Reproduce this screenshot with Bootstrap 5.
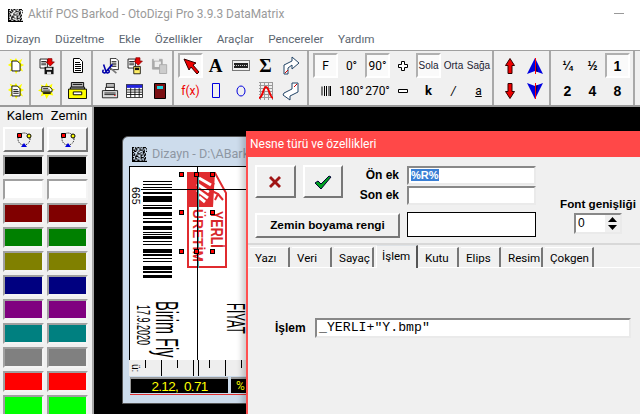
<!DOCTYPE html>
<html lang="tr">
<head>
<meta charset="UTF-8">
<title>Aktif POS Barkod</title>
<link href="https://cdn.jsdelivr.net/npm/bootstrap@5.3.0/dist/css/bootstrap.min.css" rel="stylesheet">
<style>
body { width: 640px; height: 414px; overflow: hidden; background: #f0f0f0; font-family: Roboto, "Liberation Sans", sans-serif; font-size: 12px; color: #000; }
.app-title { height: 30px; background: #fff; color: #9a9a9a; font-size: 11.9px; padding-left: 8px; gap: 5px; }
.min-mark { width: 10px; height: 1px; background: #999; margin-left: auto; margin-right: 16px; margin-bottom: 3px; }
.app-menu { height: 20px; background: #fff; color: #5c6670; font-size: 11.7px; padding-left: 6px; }
.app-menu span { margin-right: 14.5px; }
.tool-strip { height: 57px; border-top: 1px solid #a0a0a0; border-bottom: 2px solid #9a9a9a; padding-top: 2px; }
.tool-grp { display: grid; grid-template-rows: 25px 25px; grid-auto-flow: column; grid-auto-columns: 25px; border-right: 2px solid #a8a8a8; height: 54px; margin-top: -2px; padding-top: 2px; }
.w31 { width: 31px; padding-left: 3px; }
.w81 { width: 81px; padding-left: 4px; }
.w135 { width: 135px; padding-left: 4px; grid-auto-flow: row; grid-template-columns: repeat(5, 25px); }
.w185 { width: 185px; padding-left: 4px; grid-auto-flow: row; grid-template-columns: 25px 27px 25px 26px 25px 25px 25px; }
.w57 { width: 57px; padding-left: 3px; }
.w84 { width: 84px; padding-left: 4px; }
.tool-cell { display: flex; align-items: center; justify-content: center; white-space: nowrap; font-size: 12px; line-height: 1; }
.tool-on { background: #fafafa; border: 2px solid; border-color: #b0b0b0 #fff #fff #b0b0b0; }
.al-txt { font-size: 10px; color: #223; font-family: "Liberation Sans", sans-serif; }
.big-num { font-family: "Liberation Sans", sans-serif; font-weight: 700; font-size: 14px; }
.main-area { height: 307px; }
.color-side { width: 94px; border-right: 2px solid #a8a8a8; }
.color-head { height: 20px; display: grid; grid-template-columns: 44px 44px; padding-left: 3px; font-size: 13px; text-align: center; line-height: 17px; }
.color-rows { display: grid; grid-template-columns: 41px 41px; gap: 3px 3px; padding-left: 3px; }
.pen-btn { height: 25px; padding: 0; border-radius: 0; border: 2px solid; border-color: #fff #777 #777 #fff; background: #f0f0f0; display: flex; align-items: center; justify-content: center; margin-bottom: 0; }
.swatch { height: 21px; border: 2px solid; border-color: #a0a0a0 #f4f4f4 #f4f4f4 #a0a0a0; }
.work-area { width: 546px; background: #000; overflow: hidden; }
.design-win { left: 28px; top: 29px; width: 180px; height: 268px; background: #cddcec; border: 1px solid #555; border-radius: 6px 0 0 0; }
.design-title { height: 29px; padding: 6px 0 0 9px; gap: 5px; color: #8d97a3; font-size: 12.6px; white-space: nowrap; }
.design-sheet { left: 6px; top: 29px; width: 170px; height: 194px; background: #fff; border-left: 1px solid #000; border-top: 1px solid #000; }
.design-ruler { left: 6px; top: 223px; width: 170px; height: 16px; background: #eee; }
.status-a { left: 7px; top: 240px; width: 98px; height: 16px; background: #000; color: #ff0; font-size: 13.5px; letter-spacing: -.7px; word-spacing: 3px; line-height: 15px; text-align: center; border-top: 2px solid #999; border-left: 1px solid #999; font-family: "Liberation Sans", sans-serif; }
.status-b { left: 108px; top: 240px; width: 40px; height: 16px; background: #000; color: #ff0; font-size: 12px; line-height: 15px; padding-left: 5px; border-top: 2px solid #999; }
.red-rule { left: 7px; top: 257px; width: 170px; height: 1px; background: #e03030; }
.rot-txt { position: absolute; writing-mode: vertical-rl; white-space: nowrap; line-height: 1; color: #000; font-family: "Liberation Sans", sans-serif; transform-origin: left top; }
.rot-bc { left: 0; top: 19px; width: 11px; height: 19px; background: #fff; font-size: 10.5px; text-align: center; }
.rot-date { left: 3px; top: 138px; font-size: 9px; transform: scaleX(2.1); }
.rot-name { left: 21px; top: 134px; font-size: 14.5px; transform: scaleX(2.1); }
.rot-price { left: 91px; top: 136px; font-size: 11.5px; transform: scaleX(2.3); }
.bar-svg { left: 13px; top: 14px; }
.logo-svg { left: 57px; top: 5px; }
.cross-h { left: 0; top: 22px; width: 100%; height: 1px; background: #000; }
.cross-v { left: 67px; top: 0; width: 1px; height: 193px; background: #000; }
.hnd { position: absolute; width: 5px; height: 5px; background: #f00; border: 1px solid #000; }
.prop-dlg { left: 152px; top: 24px; width: 394px; height: 283px; background: #f0f0f0; border-left: 2px solid #ff5050; box-shadow: -4px 0 6px rgba(0,0,0,.2); }
.prop-head { height: 26px; background: #ff4848; color: #fff; font-size: 12px; padding-left: 4px; margin-left: -2px; }
.prop-top { height: 88px; padding: 8px 0 0 7px; border-bottom: 2px solid #d8d8d8; }
.prop-left { width: 145px; }
.act-btn { width: 41px; height: 33px; padding: 0; border-radius: 0; border: 2px solid; border-color: #fff #777 #777 #fff; background: #f0f0f0; display: flex; align-items: center; justify-content: center; }
.act-btn:last-of-type { margin-left: 7px; }
.side-lbl { width: 57px; height: 33px; text-align: right; font-weight: 700; font-family: "Liberation Sans", sans-serif; font-size: 12px; line-height: 20px; padding-right: 1px; }
.fill-btn { width: 145px; height: 25px; padding: 0; margin-top: 15px; border-radius: 0; border: 2px solid; border-color: #fff #777 #777 #fff; background: #f0f0f0; font-weight: 700; font-family: "Liberation Sans", sans-serif; font-size: 11.8px; color: #000; }
.prop-inputs { width: 129px; margin-left: 7px; padding-top: 1px; }
.win-input { border-radius: 0; border: 2px solid; border-color: #888 #eaeaea #eaeaea #888; background: #fff; padding: 0 2px; box-shadow: none; font-size: 12px; color: #000; }
.pre-input { height: 19px; margin-bottom: 1px; font-family: "Liberation Sans", sans-serif; font-weight: 700; font-size: 11px; line-height: 15px; }
.pre-input mark { background: #3a7fd5; color: #fff; padding: 0; }
.fill-box { height: 25px; margin-top: 7px; background: #fff; border: 1px solid #000; }
.font-col { margin-left: 24px; padding-top: 32px; width: 78px; }
.font-lbl { font-weight: 700; font-family: "Liberation Sans", sans-serif; font-size: 11.7px; white-space: nowrap; line-height: 14px; }
.spin-box { width: 48px; height: 21px; margin: 2px 0 0 14px; border: 2px solid; border-color: #888 #eaeaea #eaeaea #888; background: #fff; padding-left: 2px; font-family: "Liberation Sans", sans-serif; line-height: 17px; }
.spin-arrows { width: 15px; background: #f0f0f0; display: flex; flex-direction: column; align-items: center; justify-content: space-around; }
.prop-tabs { height: 22px; padding: 2px 0 0 2px; border: 0; gap: 2px; flex-wrap: nowrap; }
.prop-tabs .nav-link { height: 20px; padding: 2px 0 0 5px; color: #000; font-size: 11.6px; background: transparent; border: 0; border-radius: 0; border-right: 2px solid #777; border-top: 1px solid #fff; line-height: 16px; }
.prop-tabs .nav-link.active { margin-top: -2px; height: 23px; background: #f0f0f0; border-right: 2px solid #555; border-left: 1px solid #fff; color: #000; }
.prop-body { border-top: 1px solid #fff; height: 147px; padding: 50px 0 0 27px; }
.calc-lbl { width: 40px; line-height: 20px; font-weight: 700; font-family: "Liberation Sans", sans-serif; font-size: 12px; }
.calc-input { width: 316px; height: 20px; font-family: "Liberation Mono", monospace; font-size: 13.2px; line-height: 16px; }
</style>
</head>
<body>

<!-- title -->
<div class="app-title d-flex align-items-center">
  <svg width="15" height="13" viewBox="0 0 14 12"><path stroke="#000" d="M0 .5h2m1 0h1m1 0h2m1 0h1m1 0h3M0 1.500h1m2 0h2m2 0h1m2 0h1m2 0h1M0 2.500h3m1 0h1m2 0h3m1 0h1M0 3.500h1m1 0h2m2 0h1m3 0h2m1 0h1M0 4.500h2m3 0h1m2 0h1m1 0h2M0 5.500h1m1 0h1m2 0h3m2 0h1m1 0h1M0 6.500h3m1 0h1m3 0h2m1 0h2M0 7.500h1m2 0h3m2 0h1m2 0h1M0 8.500h2m1 0h1m2 0h1m1 0h3m1 0h1M0 9.500h1m2 0h2m3 0h1m2 0h2M0 10.500h3m2 0h2m2 0h1m1 0h1M0 11.500h14"/></svg>
  <span>Aktif POS Barkod - OtoDizgi Pro 3.9.3 DataMatrix</span>
  <div class="min-mark"></div>
</div>
<div class="app-menu d-flex align-items-center"><span>Dizayn</span><span>Düzeltme</span><span>Ekle</span><span>Özellikler</span><span>Araçlar</span><span>Pencereler</span><span>Yardım</span></div>

<!-- toolbar -->
<div class="tool-strip d-flex">
  <div class="tool-grp w31">
    <div class="tool-cell"><svg width="18" height="18" viewBox="0 0 20 20"><path fill="#ff0" d="M10 1l2 4 5-3-2 5 4 2-4 2 3 5-5-2-3 5-2-5-5 2 2-5-4-2 4-3-2-4 5 2z"/><path fill="#fff" stroke="#000" d="M5.500 4.500h6l3 3v8h-9z"/></svg></div>
    <div class="tool-cell"><svg width="18" height="18" viewBox="0 0 20 20"><path fill="#ff0" d="M10 1l2 4 5-3-2 5 4 2-4 2 3 5-5-2-3 5-2-5-5 2 2-5-4-2 4-3-2-4 5 2z"/><path fill="#fff" stroke="#000" d="M5.500 4.500h6l3 3v8h-9z"/><path stroke="#000" d="M7 8.500h5M7 10.500h6M7 12.500h6"/></svg></div>
  </div>
  <div class="tool-grp w31">
    <div class="tool-cell"><svg width="18" height="18" viewBox="0 0 22 22"><path fill="#fff" stroke="#000" d="M2.500 2.500h9v11h-9z"/><path stroke="#000" d="M4 5.500h6M4 7.500h6M4 9.500h6"/><path fill="#e00" stroke="#800" d="M12 2h5v4h3l-5 5-5-5h2z"/><path fill="#111" d="M8 12h11v9H8z"/><path fill="#ddd" d="M10 13h7v3h-7zM11 18h5v3h-5z"/></svg></div>
    <div class="tool-cell"><svg width="19" height="17" viewBox="0 0 22 20"><path fill="#ff0" d="M11 1l2 4 5-3-1 5 4 2-4 2 2 5-5-1-3 5-2-5-5 2 2-5-5-2 5-3-2-4 5 2z"/><path fill="#fff" stroke="#000" d="M5.500 5.500h9l3 3v3h-12z"/><path stroke="#000" d="M7 7.500h6M7 9.500h8"/><path fill="#111" d="M7 12h9v2H7z"/></svg></div>
  </div>
  <div class="tool-grp w31">
    <div class="tool-cell"><svg width="12" height="16" viewBox="0 0 12 16"><path fill="#fff" stroke="#000" d="M1.500 .5h6l3 3v11h-9z"/><path stroke="#000" d="M3 4.500h5M3 6.500h6M3 8.500h6M3 10.500h6M3 12.500h6"/></svg></div>
    <div class="tool-cell"><svg width="21" height="17" viewBox="0 0 20 18"><path fill="#bbb" stroke="#000" d="M3.500 .5h13v5h-13z"/><path stroke="#000" d="M5 2.500h10"/><path fill="#fff" stroke="#000" d="M2.500 5.500h15v2h-15z"/><path fill="#ff0" stroke="#000" d="M.5 7.500h19v10H.5z"/><path fill="#fff" stroke="#000" d="M5.500 10.500h9v3h-9z"/></svg></div>
  </div>
  <div class="tool-grp w81">
    <div class="tool-cell"><svg width="18" height="16" viewBox="0 0 22 20"><path fill="#fff" stroke="#000" d="M11.500 .5h7l3 3v11h-10z"/><path stroke="#000" d="M13 4.500h6M13 6.500h6M13 8.500h6M13 10.500h6"/><path fill="none" stroke="#00a" stroke-width="2" d="M3 15a2 2 0 1 0 3 2l8-9M9 15a2 2 0 1 1-3 2L3 8"/><path stroke="#777" stroke-width="2" d="M12 13l7 6"/></svg></div>
    <div class="tool-cell"><svg width="18" height="16" viewBox="0 0 22 20"><path fill="#bbb" stroke="#000" d="M6.500 .5h10v5h-10z"/><path fill="#fff" stroke="#000" d="M5.500 5.500h11v4h-11z"/><path fill="#ddd" stroke="#000" d="M1.500 9.500h19v9h-19z"/><path stroke="#000" d="M4 12.500h14M4 14.500h14"/><path fill="#e00" d="M16 15h2v1h-2z"/></svg></div>
    <div class="tool-cell"><svg width="18" height="18" viewBox="0 0 22 22"><path fill="#fff" stroke="#000" d="M2.500 2.500h9v11h-9z"/><path stroke="#000" d="M4 5.500h6M4 7.500h6M4 9.500h6"/><path fill="#e00" stroke="#800" d="M12 1h5v4h3l-5 5-5-5h2z"/><path fill="#fe6" stroke="#000" d="M9.500 11.500h8v9h-8z"/><path fill="#111" d="M11 13h5v3h-5z"/></svg></div>
    <div class="tool-cell"><svg width="17" height="14" viewBox="0 0 20 18" preserveAspectRatio="none"><path fill="#fff" stroke="#000" d="M.5 .5h19v17H.5z"/><path fill="#22d" d="M1 1h18v4H1z"/><path stroke="#000" d="M1 7.500h18M1 10.500h18M1 13.500h18M5.500 5v12M10.500 5v12M15.500 5v12"/></svg></div>
    <div class="tool-cell"><svg width="18" height="16" viewBox="0 0 20 18"><path fill="#aaa" stroke="#aaa" d="M1.500 1.500h11v11h-11z"/><path fill="#eee" d="M3 0h6v3H3zM4 4h7v6H4z"/><path fill="#ccc" stroke="#aaa" d="M9.500 7.500h8v10h-8z"/></svg></div>
    <div class="tool-cell"><svg width="12" height="16" viewBox="0 0 12 16"><path fill="#7a0f12" stroke="#000" d="M.5 .5h11v15H.5z"/><path fill="#1fd6e0" d="M3 3h6v3H3z"/></svg></div>
  </div>
  <div class="tool-grp w135">
    <div class="tool-cell tool-on"><svg width="18" height="18" viewBox="0 0 18 18"><path fill="#e00" stroke="#300" d="M2 2l12 4-3 2 6 7-2 2-6-7-2 3z"/></svg></div>
    <div class="tool-cell" style="font-size:19px;font-family:'Liberation Serif',serif;font-weight:700">A</div>
    <div class="tool-cell"><svg width="18" height="11" viewBox="0 0 18 11"><path fill="none" stroke="#000" stroke-dasharray="1 1" d="M.5 .5h17v10H.5z"/><path fill="#222" d="M2 3h14v5H2z"/><path stroke="#ccc" stroke-dasharray="1 1" d="M2 5.500h14"/></svg></div>
    <div class="tool-cell" style="font-size:19px;font-family:'Liberation Serif',serif;font-weight:700">Σ</div>
    <div class="tool-cell"><svg width="18" height="20" viewBox="0 0 18 20"><path fill="#fff" stroke="#246" d="M2 18V9l8-4V1l7 6-7 6v-4l-4 3v6z"/><path stroke="#c00" d="M3 17l3-3"/></svg></div>
    <div class="tool-cell" style="color:#e00;font-size:12px">f(x)</div>
    <div class="tool-cell"><svg width="8" height="15" viewBox="0 0 8 15"><path fill="none" stroke="#00d" d="M.5 .5h7v14h-7z"/></svg></div>
    <div class="tool-cell"><svg width="10" height="12" viewBox="0 0 10 12"><ellipse cx="5" cy="6" rx="4" ry="5" fill="none" stroke="#00d"/></svg></div>
    <div class="tool-cell"><svg width="18" height="18" viewBox="0 0 18 18"><path stroke="#999" d="M2 .5h14M2 3.500h14M2 6.500h14M2 9.500h14M2 12.500h14M2 15.500h14M3.500 0v18M7.500 0v18M11.500 0v18M15.500 0v18"/><path fill="none" stroke="#e00" stroke-width="2" d="M2 16c4 0 4-11 7-11s4 11 7 11"/></svg></div>
    <div class="tool-cell"><svg width="18" height="20" viewBox="0 0 18 20"><path fill="#fff" stroke="#246" d="M2 12l8-4V2h6v9l-8 4v4l-7-5z"/><path stroke="#c00" d="M12 6l3-3"/></svg></div>
  </div>
  <div class="tool-grp w185">
    <div class="tool-cell tool-on">F</div>
    <div class="tool-cell">0°</div>
    <div class="tool-cell tool-on">90°</div>
    <div class="tool-cell"><svg width="10" height="10" viewBox="0 0 10 10"><path fill="#fff" stroke="#000" d="M3.500 .5h3v3h3v3h-3v3h-3v-3h-3v-3h3z"/></svg></div>
    <div class="tool-cell tool-on al-txt">Sola</div>
    <div class="tool-cell al-txt">Orta</div>
    <div class="tool-cell al-txt">Sağa</div>
    <div class="tool-cell"><svg width="10" height="10" viewBox="0 0 10 10"><path stroke="#000" d="M1 .5v9M3.500 0v10M5.500 0v10M8 0v10M9.500 0v10"/></svg></div>
    <div class="tool-cell">180°</div>
    <div class="tool-cell">270°</div>
    <div class="tool-cell"><svg width="10" height="4" viewBox="0 0 10 4"><path fill="#fff" stroke="#000" d="M.5 .5h9v3h-9z"/></svg></div>
    <div class="tool-cell fw-bold" style="font-size:13px">k</div>
    <div class="tool-cell fst-italic">/</div>
    <div class="tool-cell text-decoration-underline">a</div>
  </div>
  <div class="tool-grp w57">
    <div class="tool-cell"><svg width="10" height="16" viewBox="0 0 10 16"><path fill="#e00" stroke="#300" d="M5 .5l4.500 7H7v8H3v-8H.5z"/></svg></div>
    <div class="tool-cell"><svg width="10" height="16" viewBox="0 0 10 16"><path fill="#e00" stroke="#300" d="M5 15.500l4.500-7H7v-8H3v8H.5z"/></svg></div>
    <div class="tool-cell"><svg width="16" height="16" viewBox="0 0 16 16"><path fill="#0000e0" d="M8 0l8 16-8-3-8 3z"/><path fill="#00006a" d="M8 0l3 14-3-1z"/><path stroke="#f00" d="M8.500 0v16"/></svg></div>
    <div class="tool-cell"><svg width="16" height="16" viewBox="0 0 16 16"><path fill="#0000e0" d="M8 16L16 0 8 3 0 0z"/><path fill="#00006a" d="M8 16l3-14-3 1z"/><path stroke="#f00" d="M8.500 0v16"/></svg></div>
  </div>
  <div class="tool-grp w84">
    <div class="tool-cell big-num" style="font-size:12px">¼</div>
    <div class="tool-cell big-num">2</div>
    <div class="tool-cell big-num" style="font-size:12px">½</div>
    <div class="tool-cell big-num">4</div>
    <div class="tool-cell big-num tool-on">1</div>
    <div class="tool-cell big-num">8</div>
  </div>
</div>

<div class="main-area d-flex">
  <!-- colour side -->
  <div class="color-side">
    <div class="color-head"><span>Kalem</span><span>Zemin</span></div>
    <div class="color-rows">
      <button class="pen-btn" type="button"><svg width="18" height="16" viewBox="0 0 18 16"><circle cx="9" cy="7" r="6" fill="none" stroke="#000" stroke-dasharray="1 1"/><path fill="#f00" stroke="#000" d="M2.500 1.500h4v4h-4z"/><circle cx="14" cy="4" r="2" fill="#ff0" stroke="#000"/><path fill="#00d" d="M9 11l3 4H6z"/></svg></button>
      <button class="pen-btn" type="button"><svg width="18" height="16" viewBox="0 0 18 16"><circle cx="9" cy="7" r="6" fill="none" stroke="#000" stroke-dasharray="1 1"/><path fill="#f00" stroke="#000" d="M2.500 1.500h4v4h-4z"/><circle cx="14" cy="4" r="2" fill="#ff0" stroke="#000"/><path fill="#00d" d="M9 11l3 4H6z"/></svg></button>
      <div class="swatch" style="background:#000"></div><div class="swatch" style="background:#000"></div>
      <div class="swatch" style="background:#fff"></div><div class="swatch" style="background:#fff"></div>
      <div class="swatch" style="background:#800000"></div><div class="swatch" style="background:#800000"></div>
      <div class="swatch" style="background:#008000"></div><div class="swatch" style="background:#008000"></div>
      <div class="swatch" style="background:#808000"></div><div class="swatch" style="background:#808000"></div>
      <div class="swatch" style="background:#000080"></div><div class="swatch" style="background:#000080"></div>
      <div class="swatch" style="background:#800080"></div><div class="swatch" style="background:#800080"></div>
      <div class="swatch" style="background:#008080"></div><div class="swatch" style="background:#008080"></div>
      <div class="swatch" style="background:#808080"></div><div class="swatch" style="background:#808080"></div>
      <div class="swatch" style="background:#f00"></div><div class="swatch" style="background:#f00"></div>
      <div class="swatch" style="background:#0f0"></div><div class="swatch" style="background:#0f0"></div>
    </div>
  </div>

  <!-- black desktop with the child windows -->
  <div class="work-area position-relative">
    <div class="design-win position-absolute">
      <div class="design-title d-flex align-items-center">
        <svg width="15" height="15" viewBox="0 0 14 12" preserveAspectRatio="none"><path stroke="#000" d="M0 .5h2m1 0h1m1 0h2m1 0h1m1 0h3M0 1.500h1m2 0h2m2 0h1m2 0h1m2 0h1M0 2.500h3m1 0h1m2 0h3m1 0h1M0 3.500h1m1 0h2m2 0h1m3 0h2m1 0h1M0 4.500h2m3 0h1m2 0h1m1 0h2M0 5.500h1m1 0h1m2 0h3m2 0h1m1 0h1M0 6.500h3m1 0h1m3 0h2m1 0h2M0 7.500h1m2 0h3m2 0h1m2 0h1M0 8.500h2m1 0h1m2 0h1m1 0h3m1 0h1M0 9.500h1m2 0h2m3 0h1m2 0h2M0 10.500h3m2 0h2m2 0h1m1 0h1M0 11.500h14"/></svg>
        <span>Dizayn - D:\ABarkod</span>
      </div>
      <div class="design-sheet position-absolute">
        <svg class="bar-svg position-absolute" width="29" height="98" viewBox="0 0 29 98"><path fill="#000" d="M0 0h29v1H0zM0 3h29v1H0zM0 6h29v1H0zM0 11h29v2H0zM0 15h29v6H0zM0 24h29v1H0zM0 26h29v2H0zM0 31h29v4H0zM0 37h29v1H0zM0 40h29v2H0zM0 45h29v4H0zM0 51h29v1H0zM0 53h29v1H0zM0 55h29v3H0zM0 60h29v1H0zM0 63h29v1H0zM0 68h29v4H0zM0 73h29v2H0zM0 77h29v1H0zM0 80h29v1H0zM0 85h29v4H0zM0 90h29v2H0zM0 94h29v3H0z"/></svg>
        <svg class="logo-svg position-absolute" width="41" height="97" viewBox="0 0 41 97">
          <path fill="#fff" stroke="#e02b2f" stroke-width="2" d="M1 1h27l11 20v74H1z"/>
          <path fill="#e02b2f" d="M0 0h28l-2 35H0z"/>
          <path fill="none" stroke="#fff" stroke-width="3" d="M12 6l12 7M10 12l12 8M10 18l11 8M12 25l6 5"/>
          <path fill="none" stroke="#e02b2f" stroke-width="2" d="M27 11l-4 7 8 4-3 6M31 22l5 6"/>
          <path stroke="#4aa" d="M11.500 0v96"/>
          <text transform="translate(24 39) rotate(90) scale(1 1.35)" font-family="Liberation Sans" font-weight="700" font-size="12.5" fill="#d8262a">YERLİ</text>
          <text transform="translate(6 37) rotate(90) scale(1 1.1)" font-family="Liberation Sans" font-weight="700" font-size="13.8" fill="#e02b2f">ÜRETİM</text>
        </svg>
        <div class="cross-h position-absolute"></div>
        <div class="cross-v position-absolute"></div>
        <div class="rot-txt rot-bc">665</div>
        <div class="rot-txt rot-date">17.9.2020</div>
        <div class="rot-txt rot-name">Birim Fiy</div>
        <div class="rot-txt rot-price">FIYAT</div>
        <span class="hnd" style="left:49px;top:5px"></span><span class="hnd" style="left:64px;top:5px"></span><span class="hnd" style="left:80px;top:5px"></span>
        <span class="hnd" style="left:49px;top:43px"></span><span class="hnd" style="left:80px;top:43px"></span>
        <span class="hnd" style="left:49px;top:82px"></span><span class="hnd" style="left:64px;top:82px"></span><span class="hnd" style="left:80px;top:82px"></span>
      </div>
      <svg class="design-ruler position-absolute" viewBox="0 0 170 16"><path stroke="#000" d="M16.500 0v8M32.500 0v16M48.500 0v8M64.500 0v16M69.500 0v16M80.500 0v8M96.500 0v16M112.500 0v8M128.500 0v16"/><text transform="translate(3 4) rotate(90)" font-family="Liberation Sans" font-size="10">ü:</text></svg>
      <div class="status-a position-absolute">2.12, 0.71</div>
      <div class="status-b position-absolute">%</div>
      <div class="red-rule position-absolute"></div>
    </div>

    <div class="prop-dlg position-absolute">
      <div class="prop-head d-flex align-items-center">Nesne türü ve özellikleri</div>
      <div class="prop-top d-flex">
        <div class="prop-left">
          <div class="d-flex">
            <button class="act-btn" type="button"><svg width="14" height="14" viewBox="0 0 14 14"><path fill="#a01515" d="M1 3l2-2 4 4 4-4 2 2-4 4 4 4-2 2-4-4-4 4-2-2 4-4z"/></svg></button>
            <button class="act-btn" type="button"><svg width="18" height="14" viewBox="0 0 18 14"><path fill="#00a020" stroke="#003" d="M1 8l3-2 3 3 8-8 2 1-10 12z"/></svg></button>
            <div class="side-lbl"><div>Ön ek</div><div>Son ek</div></div>
          </div>
          <button class="fill-btn" type="button">Zemin boyama rengi</button>
        </div>
        <div class="prop-inputs">
          <div class="win-input pre-input"><mark>%R%</mark></div>
          <div class="win-input pre-input"></div>
          <div class="fill-box"></div>
        </div>
        <div class="font-col">
          <div class="font-lbl">Font genişliği</div>
          <div class="spin-box d-flex justify-content-between"><span>0</span><span class="spin-arrows"><svg width="9" height="5" viewBox="0 0 9 5"><path d="M4.500 0l4.500 5H0z"/></svg><svg width="9" height="5" viewBox="0 0 9 5"><path d="M4.500 5L9 0H0z"/></svg></span></div>
        </div>
      </div>
      <ul class="nav nav-tabs prop-tabs">
        <li class="nav-item"><a class="nav-link" style="width:40px" href="#">Yazı</a></li>
        <li class="nav-item"><a class="nav-link" style="width:40px" href="#">Veri</a></li>
        <li class="nav-item"><a class="nav-link" style="width:40px" href="#">Sayaç</a></li>
        <li class="nav-item"><a class="nav-link active" style="width:42px" href="#">İşlem</a></li>
        <li class="nav-item"><a class="nav-link" style="width:39px" href="#">Kutu</a></li>
        <li class="nav-item"><a class="nav-link" style="width:40px" href="#">Elips</a></li>
        <li class="nav-item"><a class="nav-link" style="width:40px" href="#">Resim</a></li>
        <li class="nav-item"><a class="nav-link" style="width:49px" href="#">Çokgen</a></li>
      </ul>
      <div class="prop-body d-flex align-items-start">
        <div class="calc-lbl">İşlem</div>
        <div class="win-input calc-input">_YERLI+"Y.bmp"</div>
      </div>
    </div>
  </div>
</div>

<script src="https://cdn.jsdelivr.net/npm/bootstrap@5.3.0/dist/js/bootstrap.bundle.min.js"></script>
</body>
</html>
